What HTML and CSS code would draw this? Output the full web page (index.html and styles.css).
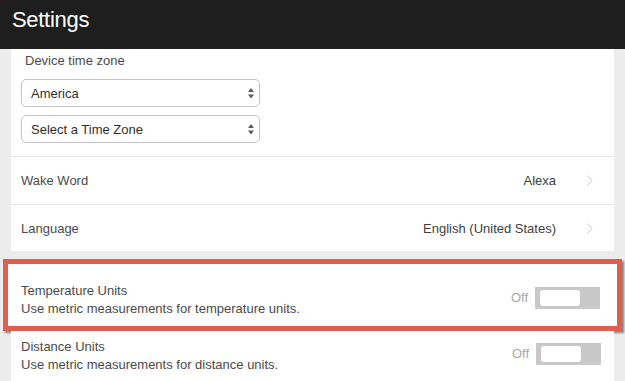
FILE: index.html
```html
<!DOCTYPE html>
<html lang="en">
<head>
	<meta charset="UTF-8">
	<title>Settings</title>
	<link rel="stylesheet" href="styles.css">
</head>
<body>
	<div id="header">Settings</div>

	<div class="card">
		<div class="zone">
			<div class="zone-label">Device time zone</div>
			<div class="select">
				<span>America</span>
				<svg class="arrows" width="6" height="11" viewBox="0 0 6 11"><path d="M3 0L6 4H0Z M0 6.5H6L3 10.5Z" fill="#5a5a5a"/></svg>
			</div>
			<div class="select">
				<span>Select a Time Zone</span>
				<svg class="arrows" width="6" height="11" viewBox="0 0 6 11"><path d="M3 0L6 4H0Z M0 6.5H6L3 10.5Z" fill="#5a5a5a"/></svg>
			</div>
		</div>
		<div class="row">
			<span class="name">Wake Word</span>
			<span class="value">Alexa</span>
			<svg class="chev" width="6" height="11" viewBox="0 0 6 11"><path d="M0.5 0.5L5 5.5L0.5 10.5" fill="none" stroke="#c9c9c9" stroke-width="1"/></svg>
		</div>
		<div class="row">
			<span class="name">Language</span>
			<span class="value">English (United States)</span>
			<svg class="chev" width="6" height="11" viewBox="0 0 6 11"><path d="M0.5 0.5L5 5.5L0.5 10.5" fill="none" stroke="#c9c9c9" stroke-width="1"/></svg>
		</div>
	</div>

	<div class="unit hilite">
		<div class="unit-text">
			<div>Temperature Units</div>
			<div>Use metric measurements for temperature units.</div>
		</div>
		<div class="switch-box">
			<span class="off">Off</span>
			<div class="switch"><div class="knob"></div></div>
		</div>
	</div>

	<div class="card">
		<div class="unit">
			<div class="unit-text">
				<div>Distance Units</div>
				<div>Use metric measurements for distance units.</div>
			</div>
			<div class="switch-box">
				<span class="off">Off</span>
				<div class="switch"><div class="knob"></div></div>
			</div>
		</div>
	</div>
</body>
</html>
```

FILE: styles.css
```css
*{margin:0;padding:0;box-sizing:border-box}
body{background:#ececec;font-family:"Liberation Sans",Arial,sans-serif;font-size:13px;color:#4a4a4a;height:381px;overflow:hidden}
#header{height:49px;background:#1e1e1e;color:#fff;font-size:22px;line-height:22px;padding:9px 0 0 12px;letter-spacing:-0.3px}
.card{background:#fff;margin:0 11px}
.zone{padding:4px 10px 13px;border-bottom:1px solid #e6e6e6}
.zone-label{line-height:16px;padding-left:4px;margin-bottom:10px}
.select{width:239px;height:28px;border:1px solid #c4c4c4;border-radius:5px;display:flex;align-items:center;justify-content:space-between;padding:0 5px 0 9px;color:#2e2e2e;font-size:13px}
.select + .select{margin-top:8px}
.arrows{margin-top:1px}
.row{height:47px;display:flex;align-items:center;padding:0 21px 0 10px;border-top:1px solid #e6e6e6}
.zone + .row{border-top:none}
.name{flex:1}
.value{margin-right:31px;color:#404040}
.unit{display:flex;align-items:flex-start;line-height:18px}
.unit-text{flex:1}
.unit .switch-box{display:flex;align-items:center;margin-top:5px}
.off{color:#a8a8a8;margin-right:7px}
.switch{width:65px;height:22px;background:#c8c8c8;padding:3px 0 0 5px}
.knob{width:40px;height:16px;background:#fff;border-radius:3px}
.hilite{margin:8px 3px 0;border:5px solid #e35d4d;background:#fff;padding:18px 17px 0 13px;height:72px;box-shadow:2px 2px 2px rgba(0,0,0,.45)}
.card .unit{padding:7px 13px 0 10px;height:51px}
```
